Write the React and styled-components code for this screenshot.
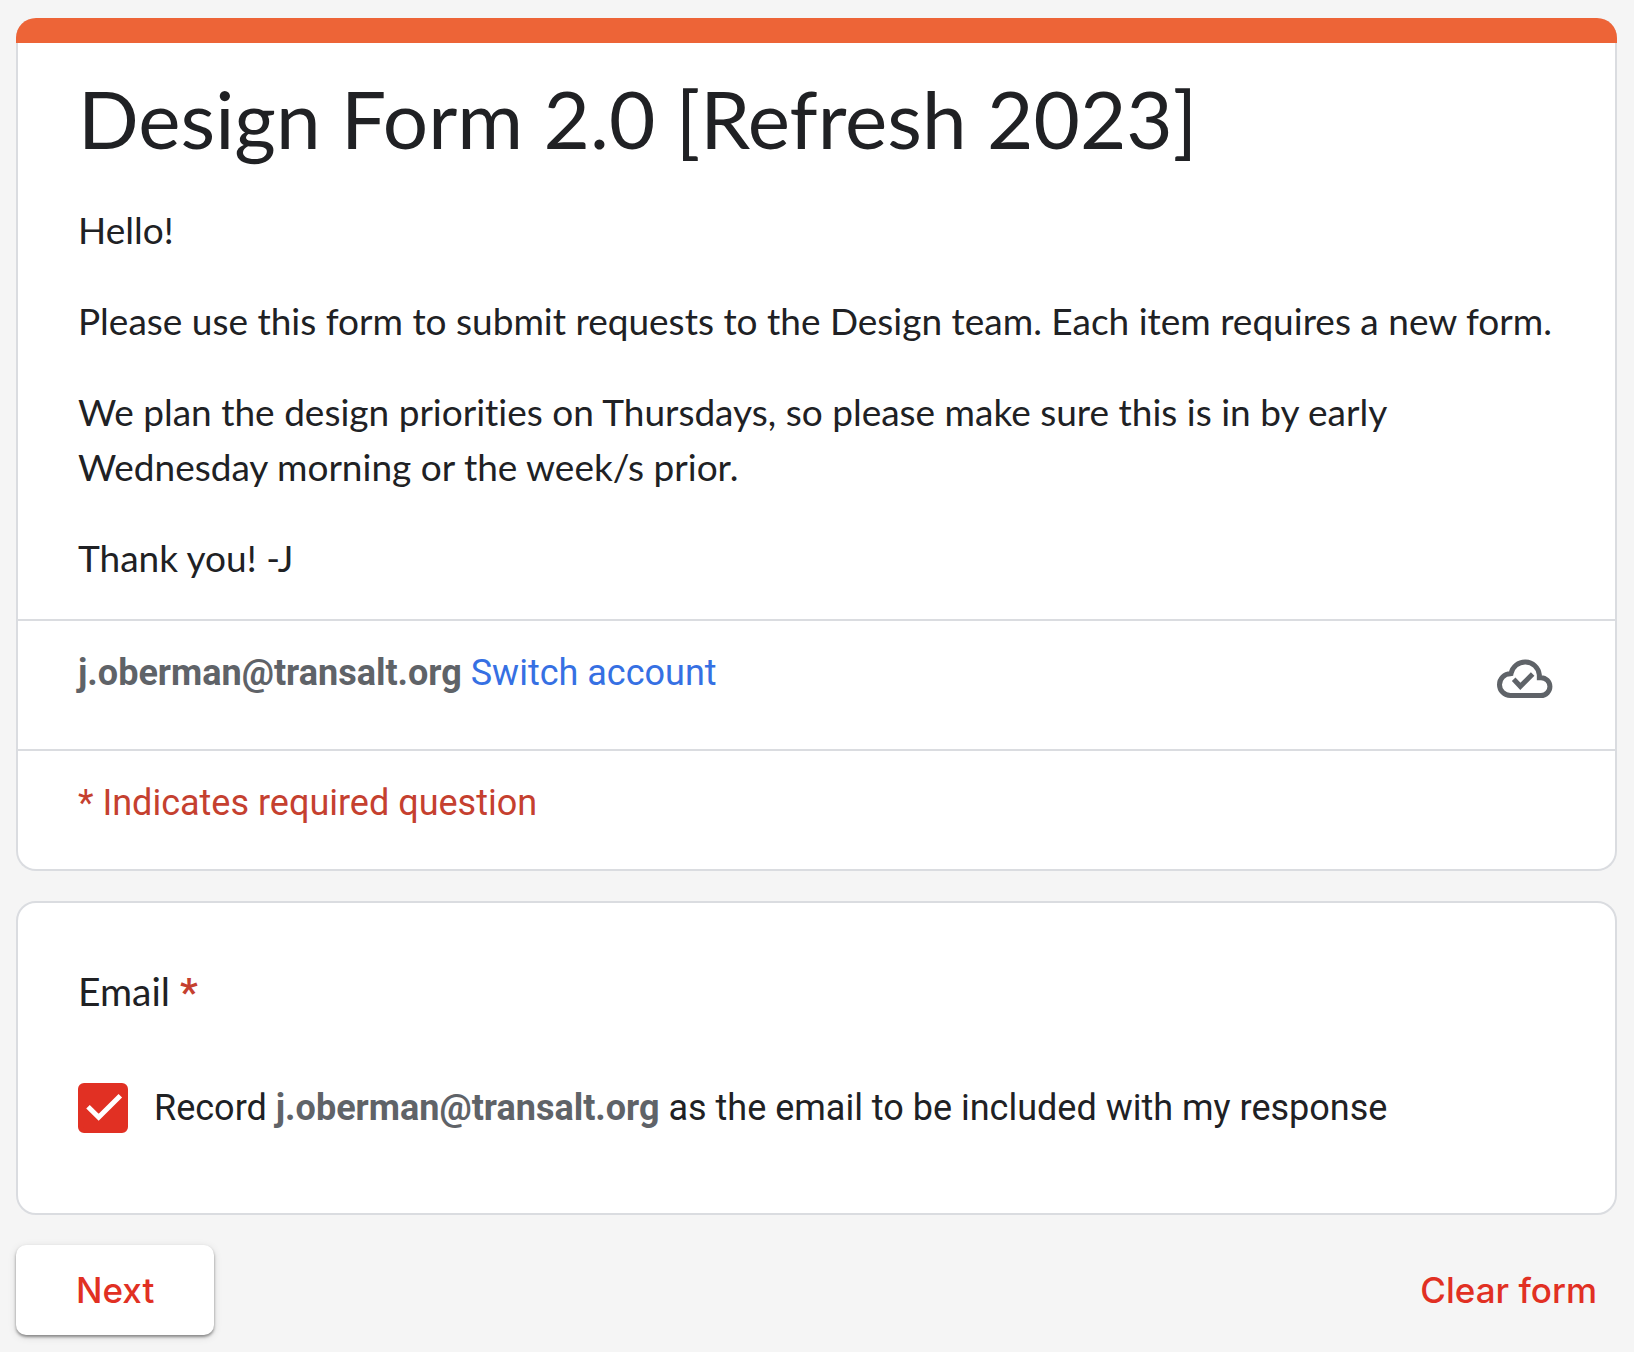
import React, { useState } from 'react'
import styled, { createGlobalStyle } from 'styled-components'

const GlobalStyle = createGlobalStyle`
  * {
    box-sizing: border-box;
  }
  body {
    margin: 0;
    background: #f5f5f5;
    color: #202124;
    font-family: Roboto, sans-serif;
    font-variant-ligatures: none;
  }
`

const Page = styled.main`
  padding: 18px 17px 16px 16px;
`

const Form = styled.form`
  display: flex;
  flex-direction: column;
  gap: 30px;
`

const Card = styled.section`
  background: #fff;
  border: 2px solid #dadce0;
  border-top-width: ${({ $accent }) => ($accent ? '0' : '2px')};
  border-radius: 20px;
`

const AccentBar = styled.div`
  height: 25px;
  margin: 0 -2px;
  background: #ed6437;
  border-radius: 20px 20px 0 0;
`

const Intro = styled.div`
  padding: 28px 50px 34px 60px;
`

const Title = styled.h1`
  margin: 0 0 37px;
  font-family: Lato, sans-serif;
  font-size: 80px;
  font-weight: 400;
  line-height: 94px;
`

const Description = styled.div`
  display: flex;
  flex-direction: column;
  gap: 36px;
  font-family: Lato, sans-serif;
  font-size: 37px;
  line-height: 55px;

  p {
    margin: 0;
  }
`

const Row = styled.div`
  display: flex;
  justify-content: space-between;
  align-items: flex-start;
  min-height: ${({ $height }) => $height};
  padding: 31px 62px 31px 60px;
  border-top: 2px solid #dadce0;
  font-size: 36px;
  line-height: 42px;
`

const Address = styled.strong`
  color: #5f6368;
  font-weight: 700;
`

const SwitchLink = styled.a`
  color: #3670e3;
  text-decoration: none;

  &:hover {
    text-decoration: underline;
  }
`

const CloudIcon = styled.svg`
  width: 56px;
  height: 40px;
  margin-top: 6px;
  fill: none;
  stroke: #5f6368;
  stroke-width: 15;
`

const Required = styled.span`
  color: #c5402f;
`

const Question = styled.div`
  padding: 64px 60px 80px;

  h2 {
    margin: 0 0 68px;
    font-family: Lato, sans-serif;
    font-size: 39px;
    font-weight: 400;
    line-height: 48px;
  }
  h2 ${Required} {
    font-family: Roboto, sans-serif;
    font-weight: 700;
    line-height: 1;
  }
`

const CheckLabel = styled.label`
  display: flex;
  align-items: center;
  gap: 26px;
  font-size: 36px;
  line-height: 50px;
`

const CheckBox = styled.span`
  display: grid;
  flex: none;
  width: 50px;
  height: 50px;

  input,
  svg {
    grid-area: 1 / 1;
    width: 50px;
    height: 50px;
    margin: 0;
  }
  input {
    appearance: none;
    border: 5px solid #5f6368;
    border-radius: 6px;
  }
  input:checked {
    border-color: #e13023;
    background: #e13023;
  }
  svg {
    fill: none;
    stroke: #fff;
    stroke-width: 15;
    pointer-events: none;
  }
`

const Actions = styled.div`
  display: flex;
  justify-content: space-between;
  align-items: center;
`

const Button = styled.button`
  height: 90px;
  padding: ${({ $raised }) => ($raised ? '0 60px' : '0 20px')};
  border: 0;
  border-radius: 10px;
  background: ${({ $raised }) => ($raised ? '#fff' : 'transparent')};
  box-shadow: ${({ $raised }) =>
    $raised ? '0 2px 3px rgba(0, 0, 0, 0.4), 0 2px 8px rgba(0, 0, 0, 0.12)' : 'none'};
  color: #e13023;
  font-family: Inter, sans-serif;
  font-size: 35px;
  font-weight: 500;
  line-height: 44px;
  cursor: pointer;
`

const email = 'j.oberman@transalt.org'

const App = () => {
  const [record, setRecord] = useState(true)

  return (
    <>
      <GlobalStyle />
      <Page>
        <Form onSubmit={(e) => e.preventDefault()}>
          <Card $accent>
            <AccentBar />
            <Intro>
              <Title>Design Form 2.0 [Refresh 2023]</Title>
              <Description>
                <p>Hello!</p>
                <p>Please use this form to submit requests to the Design team. Each item requires a new form.</p>
                <p>
                  We plan the design priorities on Thursdays, so please make sure this is in by early
                  Wednesday morning or the week/s prior.
                </p>
                <p>Thank you! -J</p>
              </Description>
            </Intro>
            <Row $height="130px">
              <span>
                <Address>{email}</Address> <SwitchLink href="#switch">Switch account</SwitchLink>
              </span>
              <CloudIcon viewBox="0 0 168 120" role="img" aria-label="Draft saved">
                <path d="M40 112.5A32.5 32.5 0 0 1 40 47.5L42 47A43 43 0 0 1 127 50V59H132A26.7 26.7 0 0 1 132 112.5Z" />
                <path d="M50 64L70 85L107 48" />
              </CloudIcon>
            </Row>
            <Row $height="120px">
              <Required>* Indicates required question</Required>
            </Row>
          </Card>

          <Card>
            <Question>
              <h2>
                Email <Required>*</Required>
              </h2>
              <CheckLabel>
                <CheckBox>
                  <input type="checkbox" checked={record} onChange={(e) => setRecord(e.target.checked)} />
                  {record && (
                    <svg viewBox="0 0 150 150" aria-hidden="true">
                      <path d="M30 71L62 103L127 38" />
                    </svg>
                  )}
                </CheckBox>
                <span>
                  Record <Address>{email}</Address> as the email to be included with my response
                </span>
              </CheckLabel>
            </Question>
          </Card>

          <Actions>
            <Button type="submit" $raised>Next</Button>
            <Button type="reset" onClick={() => setRecord(false)}>Clear form</Button>
          </Actions>
        </Form>
      </Page>
    </>
  )
}

export default App
